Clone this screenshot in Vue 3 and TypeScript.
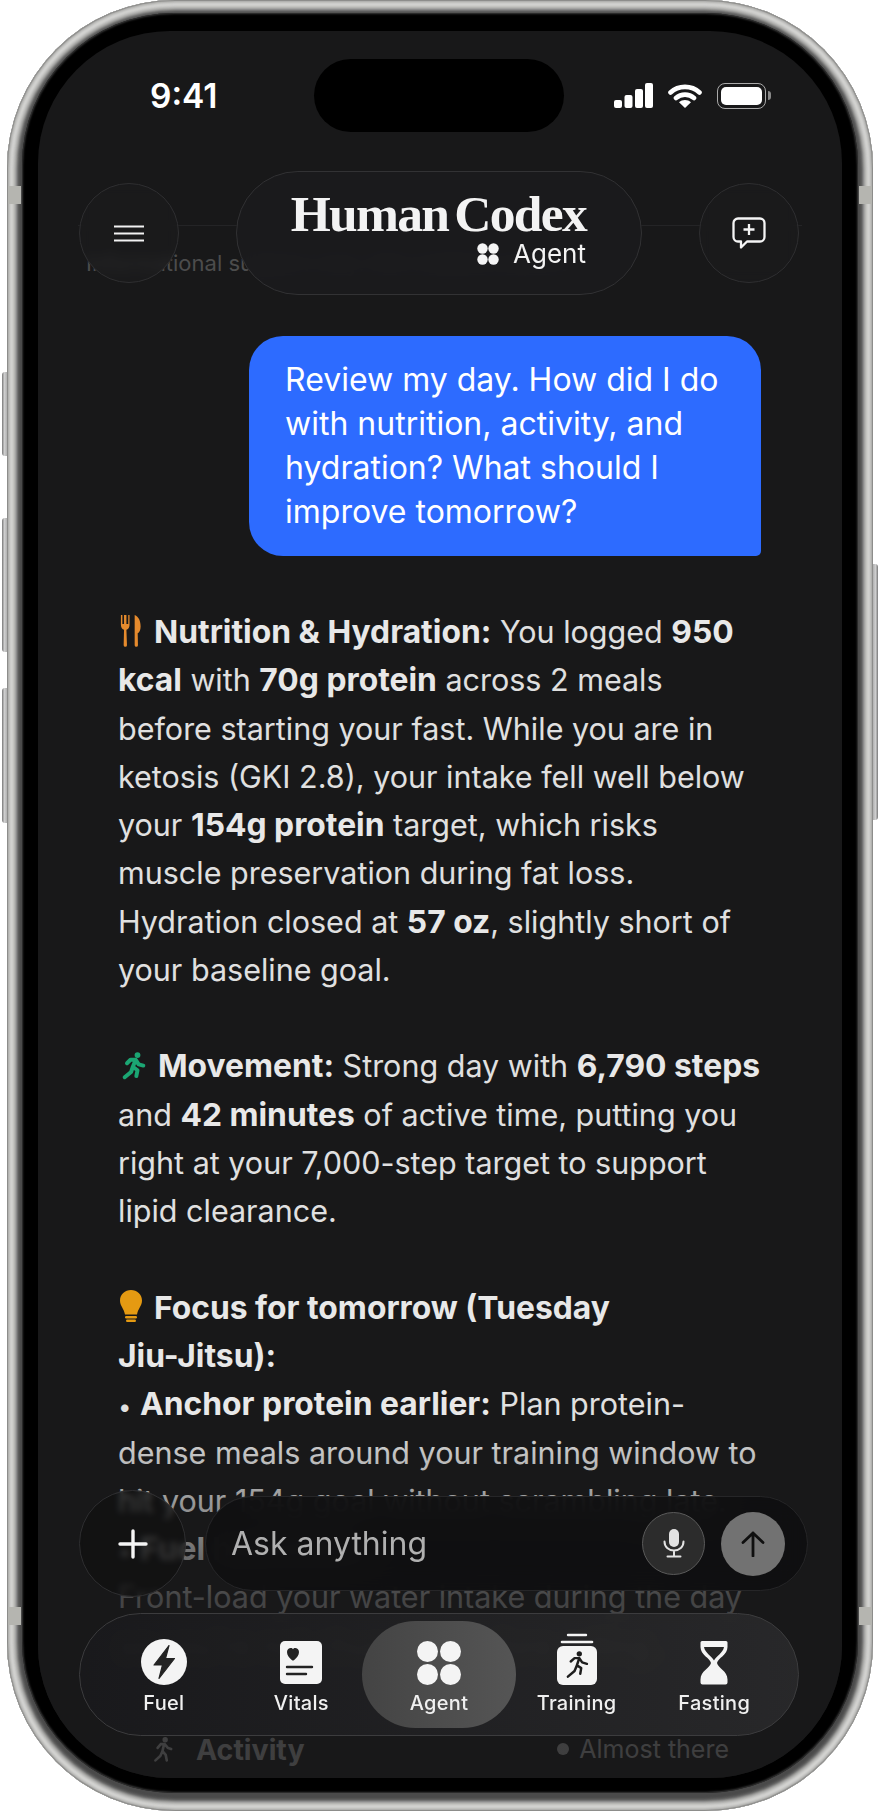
<template>
  <div class="stage">
    <div class="btn btn-mute"></div>
    <div class="btn btn-up"></div>
    <div class="btn btn-down"></div>
    <div class="btn btn-side"></div>
    <div class="band band-tl"></div>
    <div class="band band-tr"></div>
    <div class="band band-bl"></div>
    <div class="band band-br"></div>

    <div class="frame">
      <div class="bezel">
        <div class="screen">
          <div class="chat">
            <div class="notice">
              <div class="notice-line"></div>
              <p>Informational support only. Not medical advice.</p>
            </div>

            <div class="bubble">Review my day. How did I do with nutrition, activity, and hydration? What should I improve tomorrow?</div>

            <div class="reply">
              <p>
                <svg class="emoji fork" viewBox="0 0 24 36"><path d="M1 1v11c0 3 1.600 4.600 3.400 5.200L4 34a1.800 1.800 0 0 0 3.600 0L7 17.200C8.800 16.600 10.400 15 10.400 12V1H9v10H7V1H4.400v10H2.600V1z"/><path d="M16 34V1c4.500 1.500 6.500 7 6.500 12.500 0 4-1.500 6.500-3.200 7.500l.3 13a1.800 1.800 0 0 1-3.600 0z"/></svg>
                <b>Nutrition &amp; Hydration:</b> You logged <b>950 kcal</b> with <b>70g protein</b> across 2 meals before starting your fast. While you are in ketosis (GKI 2.8), your intake fell well below your <b>154g protein</b> target, which risks muscle preservation during fat loss. Hydration closed at <b>57 oz</b>, slightly short of your baseline goal.
              </p>
              <p>
                <svg class="emoji runner" viewBox="0 0 24 24"><circle cx="15" cy="3.500" r="2.500"/><path d="M6 10.500 9 7.500h4.500l2.500 4 4 1M13.500 7.500 11 13.500l4 3-1 5M11 13.500 9.500 18 4 22.500"/></svg>
                <b>Movement:</b> Strong day with <b>6,790 steps</b> and <b>42 minutes</b> of active time, putting you right at your 7,000-step target to support lipid clearance.
              </p>
              <p>
                <svg class="emoji bulb" viewBox="0 0 22 34"><path d="M11 0C5 0 0 4.600 0 10.500c0 5.500 4 8 5 14h12c1-6 5-8.500 5-14C22 4.600 17 0 11 0z"/><rect x="5" y="26" width="12" height="2.400" rx="1.200"/><rect x="6" y="29.500" width="10" height="2.400" rx="1.200"/></svg>
                <b>Focus for tomorrow (Tuesday <span class="nobreak">Jiu-Jitsu):</span></b><br>
                <span class="dot">•</span> <b>Anchor protein earlier:</b> Plan protein-dense meals around your training window to hit your 154g goal without scrambling late.<br>
                <span class="dot">•</span> <b>Fuel hydration:</b><br>
                Front-load your water intake during the day so you're not chugging before rolling.
              </p>
            </div>

            <div class="activity">
              <div class="activity-name">
                <svg viewBox="0 0 24 24"><circle cx="14" cy="3.500" r="2.500"/><path d="M7 11l3-3.500h3.500l3 3.500 3 1M13 7.500 11.500 14l3 3.500 1 5M11.500 14 9.500 18.500 5 22.500"/></svg>
                <b>Activity</b>
              </div>
              <div class="activity-state"><i></i>Almost there</div>
            </div>
          </div>

          <div class="fade"></div>

          <div class="status">
            <span class="time">9:41</span>
            <div class="island"></div>
            <div class="status-icons">
              <svg width="39" height="25" viewBox="0 0 39 25" fill="#fff"><rect y="17" width="8" height="8" rx="2"/><rect x="10.500" y="12" width="8" height="13" rx="2"/><rect x="21" y="6" width="8" height="19" rx="2"/><rect x="31" width="8" height="25" rx="2"/></svg>
              <svg width="34" height="25" viewBox="0 0 34 25"><path d="M2.500 9.500C10.500 2 23.500 2 31.500 9.500M8 15c5-4.500 13-4.500 18 0" fill="none" stroke="#fff" stroke-width="4.600" stroke-linecap="round"/><path d="M17 25l-6-5.800c3.400-3 8.600-3 12 0z" fill="#fff"/></svg>
              <div class="battery"><div></div></div>
            </div>
          </div>

          <div class="topbar">
            <button class="round-btn">
              <svg width="30" height="17" viewBox="0 0 30 17" stroke="#f2f2f2" stroke-width="2.200"><path d="M0 1.500h30M0 8.500h30M0 15.500h30"/></svg>
            </button>
            <div class="logo-pill">
              <div class="logo">Human Codex</div>
              <div class="logo-sub">
                <svg width="22" height="22" viewBox="0 0 22 22" fill="#f5f5f5"><circle cx="5.500" cy="5.500" r="5.200"/><circle cx="16.500" cy="5.500" r="5.200"/><circle cx="5.500" cy="16.500" r="5.200"/><circle cx="16.500" cy="16.500" r="5.200"/></svg>
                <span>Agent</span>
              </div>
            </div>
            <button class="round-btn">
              <svg width="34" height="32" viewBox="0 0 34 32" fill="none" stroke="#f5f5f5" stroke-width="2.300" stroke-linejoin="round"><path d="M6 1.500h22a4.500 4.500 0 0 1 4.500 4.500v14a4.500 4.500 0 0 1-4.500 4.500H15L9 30.500v-6H6A4.500 4.500 0 0 1 1.500 20V6A4.500 4.500 0 0 1 6 1.500z"/><path d="M17 7v11M11.500 12.500h11"/></svg>
            </button>
          </div>

          <div class="composer">
            <button class="plus-btn">
              <svg width="30" height="30" viewBox="0 0 30 30" stroke="#f5f5f5" stroke-width="3.400" stroke-linecap="round"><path d="M15 2v26M2 15h26"/></svg>
            </button>
            <div class="input-pill">
              <span class="placeholder">Ask anything</span>
              <button class="mic-btn">
                <svg width="22" height="29" viewBox="0 0 22 29"><rect x="6" y="0" width="10" height="18" rx="5" fill="#e2e2e2"/><path d="M1.500 12.500c0 5.500 4 9 9.500 9s9.500-3.500 9.500-9M11 21.500V27M4.500 27.500h13" fill="none" stroke="#e2e2e2" stroke-width="2" stroke-linecap="round"/></svg>
              </button>
              <button class="send-btn">
                <svg width="24" height="26" viewBox="0 0 24 26" fill="none" stroke="#0f0f0f" stroke-width="2.800" stroke-linecap="round" stroke-linejoin="round"><path d="M12 25V2M2 11.500 12 2l10 9.500"/></svg>
              </button>
            </div>
          </div>

          <nav class="tabs">
            <div v-for="t in tabs" :key="t" class="tab" :class="{ active: t === 'Agent' }">
              <div class="tab-icon">
                <svg v-if="t === 'Fuel'" width="46" height="46" viewBox="0 0 46 46"><circle cx="23" cy="23" r="23" fill="#f4f4f4"/><path d="M28 6.500 13 26h8.500L18 39.500 33.500 19.500H24.500z" fill="#232323" stroke="#232323" stroke-width="1.200" stroke-linejoin="round"/></svg>
                <svg v-if="t === 'Vitals'" width="42" height="44" viewBox="0 0 42 44"><rect width="42" height="43" rx="5" fill="#f4f4f4"/><path d="M21 19.500c-.8 0-1-.4-1.500-.8C17 16.500 15 14.500 15 11c0-2.500 2-4 3.800-4 1 0 1.800.5 2.200 1.300.4-.8 1.200-1.300 2.200-1.300 1.800 0 3.800 1.500 3.800 4 0 3.500-2 5.500-4.500 7.700-.5.400-.7.800-1.500.8z" fill="#232323" transform="translate(-8 0)"/><path d="M7 26h25M7 33h19" stroke="#232323" stroke-width="2.400" stroke-linecap="round"/></svg>
                <svg v-if="t === 'Agent'" width="44" height="44" viewBox="0 0 44 44" fill="#f4f4f4"><circle cx="10.500" cy="10.500" r="10.500"/><circle cx="33.500" cy="10.500" r="10.500"/><circle cx="10.500" cy="33.500" r="10.500"/><circle cx="33.500" cy="33.500" r="10.500"/></svg>
                <svg v-if="t === 'Training'" width="40" height="52" viewBox="0 0 40 52"><path d="M11 2h18" stroke="#f4f4f4" stroke-width="2.400" stroke-linecap="round"/><path d="M5 9h30" stroke="#f4f4f4" stroke-width="2.600" stroke-linecap="round"/><rect y="13" width="40" height="39" rx="6" fill="#f4f4f4"/><g transform="translate(9 18) scale(.95)"><circle cx="14" cy="3" r="2.800" fill="#1d1d1d"/><path d="M5 11l4-3.500h5l3 4.500 5 1.500M14 7.500 11.500 15l4.500 3-1 6M11.500 15 9 21 2 27" fill="none" stroke="#1d1d1d" stroke-width="2.600" stroke-linecap="round" stroke-linejoin="round"/></g></svg>
                <svg v-if="t === 'Fasting'" width="28" height="44" viewBox="0 0 28 44"><path d="M2 0h24a1.500 1.500 0 0 1 1.500 1.500V6C27.500 14 18 17 17 22c1 5 10.500 8 10.500 16.500v3a2 2 0 0 1-2 2h-23a2 2 0 0 1-2-2v-3C.5 30 10 27 11 22 10 17 .5 14 .5 6V1.500A1.500 1.500 0 0 1 2 0z" fill="#f4f4f4"/><path d="M4 6h20c-1 6-8 9.500-10 13.500C12 15.500 5 12 4 6z" fill="#252525"/></svg>
              </div>
              <span>{{ t }}</span>
            </div>
          </nav>
        </div>
      </div>
    </div>
  </div>
</template>

<script setup lang="ts">
const tabs: string[] = ['Fuel', 'Vitals', 'Agent', 'Training', 'Fasting']
</script>

<style>
html, body { background: #fff; }
</style>

<style scoped>
.stage {
  position: relative;
  width: 880px;
  height: 1811px;
  padding: 0 7px;
  box-sizing: border-box;
  font-family: Inter, "Liberation Sans", sans-serif;
  overflow: hidden;
}
.frame {
  position: relative;
  height: 1811px;
  box-sizing: border-box;
  padding: 13px 15px 18px;
  border-radius: 168px;
  background: #4a4a4a;
  box-shadow:
    inset 0 0 1px 1px #8a8a88,
    inset 0 0 3px 3px #b0b0ae,
    inset 0 0 4px 7px #e0e0de,
    inset 0 0 3px 10px #9a9a98,
    inset 0 0 2px 13px #555;
}
.bezel {
  height: 100%;
  box-sizing: border-box;
  padding: 18px 16px 15px 16px;
  border-radius: 152px;
  background: #000;
  box-shadow: inset 0 0 2px 1px #3a3a3a;
}
.screen {
  position: relative;
  height: 100%;
  overflow: hidden;
  border-radius: 132px;
  background: #181819;
  color: #e0e0e0;
}
.btn {
  position: absolute;
  left: 2px;
  width: 6px;
  border-radius: 3px 0 0 3px;
  background: linear-gradient(90deg, #777, #cfcfcf 40%, #a5a5a5);
}
.btn-mute { top: 372px; height: 84px; }
.btn-up { top: 518px; height: 134px; }
.btn-down { top: 688px; height: 135px; }
.btn-side {
  left: auto;
  right: 2px;
  top: 564px;
  height: 256px;
  border-radius: 0 3px 3px 0;
  background: linear-gradient(270deg, #777, #cfcfcf 40%, #a5a5a5);
}
.band {
  position: absolute;
  z-index: 2;
  width: 13px;
  height: 18px;
  background: #b5b5b0;
}
.band-tl { left: 8px; top: 186px; }
.band-tr { right: 8px; top: 186px; }
.band-bl { left: 8px; top: 1607px; }
.band-br { right: 8px; top: 1607px; }

.chat {
  padding: 194px 80px 0;
}
.notice {
  height: 111px;
  margin: 0 -32px;
  color: #4c4c4c;
  font-size: 22px;
}
.notice-line {
  height: 1px;
  margin: 0 -8px 24px;
  background: #242426;
}
.notice p {
  margin: 0;
  white-space: nowrap;
}
.bubble {
  width: 512px;
  margin-left: 131px;
  box-sizing: border-box;
  padding: 22px 30px 22px 36px;
  border-radius: 34px 34px 5px 34px;
  background: #2d6bff;
  color: #fff;
  font-size: 32px;
  line-height: 44px;
}
.reply {
  margin-top: 52px;
  width: 645px;
  font-size: 30.500px;
  line-height: 48.270px;
}
.reply p {
  margin: 0 0 48.270px;
}
.reply p:last-child {
  margin-bottom: 0;
}
.reply b {
  font-size: 31.800px;
  font-weight: 700;
  color: #e8e8e8;
}
.dot {
  font-size: 24px;
  line-height: 0;
}
.nobreak {
  white-space: nowrap;
}
.emoji {
  display: inline-block;
  vertical-align: -5px;
  margin: 0 12px 0 2px;
}
.fork { width: 22px; height: 35px; fill: #e58a2d; }
.runner { width: 28px; height: 36px; margin-right: 10px; vertical-align: -6px; fill: #1ba673; stroke: #1ba673; stroke-width: 3.400; stroke-linecap: round; stroke-linejoin: round; }
.runner path { fill: none; }
.runner circle { stroke: none; }
.bulb { width: 22px; height: 34px; margin-right: 12px; fill: #e59a12; }

.activity {
  display: flex;
  justify-content: space-between;
  align-items: center;
  width: 644px;
  box-sizing: border-box;
  margin-top: 62px;
  padding: 0 33px 0 32px;
  color: #c8c8c8;
}
.activity-name {
  display: flex;
  align-items: center;
  gap: 20px;
  font-size: 28.500px;
}
.activity-name b { font-weight: 700; }
.activity-name svg {
  width: 26px;
  height: 30px;
  fill: #c8c8c8;
  stroke: #c8c8c8;
  stroke-width: 2.400;
  stroke-linecap: round;
}
.activity-name svg path { fill: none; }
.activity-name svg circle { stroke: none; }
.activity-state {
  display: flex;
  align-items: center;
  gap: 10px;
  font-size: 25px;
}
.activity-state i {
  width: 12px;
  height: 12px;
  border-radius: 50%;
  background: currentColor;
}

.fade {
  position: absolute;
  left: 0;
  right: 0;
  top: 1389px;
  bottom: 0;
  background: linear-gradient(180deg, rgba(24, 24, 25, 0), rgba(24, 24, 25, .78) 50%, rgba(24, 24, 25, .78));
  pointer-events: none;
}
.status {
  position: absolute;
  left: 0;
  right: 0;
  top: 28px;
  display: flex;
  align-items: center;
  height: 73px;
}
.time {
  width: 276px;
  box-sizing: border-box;
  padding-left: 112px;
  color: #fff;
  font-size: 33.500px;
  font-weight: 600;
}
.island {
  width: 250px;
  height: 73px;
  border-radius: 37px;
  background: #000;
}
.status-icons {
  display: flex;
  align-items: center;
  gap: 15px;
  margin-left: 50px;
}
.battery {
  position: relative;
  width: 49px;
  height: 26px;
  box-sizing: border-box;
  padding: 3px;
  border: 1.500px solid #aaa;
  border-radius: 8px;
}
.battery div {
  height: 100%;
  border-radius: 5px;
  background: #fff;
}
.battery::after {
  content: "";
  position: absolute;
  right: -6px;
  top: 7px;
  width: 3px;
  height: 9px;
  border-radius: 0 3px 3px 0;
  background: #888;
}
.topbar {
  position: absolute;
  left: 41px;
  right: 43px;
  top: 140px;
  display: flex;
  align-items: center;
  justify-content: space-between;
}
button {
  padding: 0;
  border: 0;
  background: none;
  display: flex;
  align-items: center;
  justify-content: center;
}
.round-btn {
  width: 100px;
  height: 100px;
  border: 1.500px solid #2f2f31;
  border-radius: 50%;
  background: rgba(27, 27, 29, .7);
  backdrop-filter: blur(6px);
}
.logo-pill {
  display: flex;
  flex-direction: column;
  align-items: flex-end;
  width: 406px;
  height: 124px;
  box-sizing: border-box;
  padding: 18px 55px 0 0;
  border: 1.500px solid #323234;
  border-radius: 62px;
  background: rgba(27, 27, 29, .9);
  backdrop-filter: blur(12px);
}
.logo {
  color: #f3f3f3;
  font-family: "Liberation Serif", serif;
  font-size: 51.500px;
  font-weight: 700;
  line-height: 48px;
  letter-spacing: -1.700px;
  word-spacing: -5px;
  white-space: nowrap;
}
.logo-sub {
  display: flex;
  align-items: center;
  gap: 14px;
  color: #f3f3f3;
  font-size: 26px;
  line-height: 32px;
}
.composer {
  position: absolute;
  left: 41px;
  right: 34px;
  top: 1459px;
  display: flex;
  align-items: center;
  gap: 19px;
}
.plus-btn {
  flex: none;
  width: 107px;
  height: 107px;
  border: 1.500px solid #2f2f31;
  border-radius: 50%;
  background: rgba(14, 14, 15, .62);
  backdrop-filter: blur(3px);
}
.input-pill {
  flex: 1;
  display: flex;
  align-items: center;
  height: 95px;
  box-sizing: border-box;
  padding: 0 22px 0 25px;
  border: 1.500px solid #262628;
  border-radius: 48px;
  background: rgba(15, 15, 16, .92);
  backdrop-filter: blur(14px);
}
.placeholder {
  flex: 1;
  color: #b0b0b0;
  font-size: 32px;
}
.mic-btn {
  width: 63px;
  height: 63px;
  margin-right: 16px;
  border: 1.500px solid #5a5a5a;
  border-radius: 50%;
  background: #2c2c2c;
}
.send-btn {
  width: 64px;
  height: 64px;
  border-radius: 50%;
  background: #727272;
}
.tabs {
  position: absolute;
  left: 41px;
  right: 43px;
  top: 1582px;
  display: grid;
  grid-template-columns: repeat(5, 1fr);
  align-items: center;
  height: 123px;
  box-sizing: border-box;
  padding: 0 15px;
  border: 1.500px solid #3c3c3e;
  border-radius: 62px;
  background: linear-gradient(90deg, rgba(26, 26, 28, .92), rgba(42, 42, 43, .92));
  backdrop-filter: blur(6px);
}
.tab {
  display: flex;
  flex-direction: column;
  align-items: center;
  height: 107px;
  box-sizing: border-box;
  color: #f0f0f0;
  font-size: 20px;
  font-weight: 500;
  letter-spacing: .3px;
}
.tab-icon {
  display: flex;
  align-items: flex-end;
  justify-content: center;
  height: 64px;
  margin-bottom: 6px;
}
.tab.active {
  margin: 0 -8px;
  border-radius: 54px;
  background: linear-gradient(90deg, #444, #555);
}
</style>
